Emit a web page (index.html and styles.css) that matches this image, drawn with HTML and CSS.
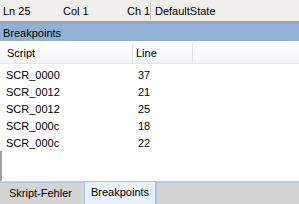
FILE: index.html
```html
<!DOCTYPE html>
<html>
<head>
<meta charset="utf-8">
<link rel="stylesheet" href="styles.css">
</head>
<body>
<div class="app">
  <div class="status">
    <span class="st st-ln">Ln 25</span>
    <span class="st st-col">Col 1</span>
    <span class="st st-ch">Ch 1</span>
    <span class="st st-state">DefaultState</span>
  </div>
  <div class="splitter"></div>
  <div class="title">Breakpoints</div>
  <div class="list">
    <div class="colhead">
      <div class="hcell c-script">Script</div>
      <div class="hcell c-line">Line</div>
      <div class="hcell c-rest"></div>
    </div>
    <div class="rows">
      <div class="row"><span class="c-script">SCR_0000</span><span class="c-line">37</span></div>
      <div class="row"><span class="c-script">SCR_0012</span><span class="c-line">21</span></div>
      <div class="row"><span class="c-script">SCR_0012</span><span class="c-line">25</span></div>
      <div class="row"><span class="c-script">SCR_000c</span><span class="c-line">18</span></div>
      <div class="row"><span class="c-script">SCR_000c</span><span class="c-line">22</span></div>
    </div>
    <div class="filler"></div>
  </div>
  <div class="tabs">
    <div class="tab">Skript-Fehler</div>
    <div class="tab active">Breakpoints</div>
    <div class="tabfill"></div>
  </div>
</div>
</body>
</html>
```
FILE: styles.css
```css
* { box-sizing: border-box; }
html, body { margin: 0; padding: 0; }
body {
  width: 299px;
  height: 204px;
  overflow: hidden;
  font-family: "Liberation Sans", Arial, sans-serif;
  font-size: 11px;
  color: #000;
  background: #fff;
}
.app {
  display: flex;
  flex-direction: column;
  height: 204px;
}
.status {
  height: 21px;
  background: #f0eeeb;
  display: flex;
  align-items: center;
  padding-left: 3px;
  padding-top: 1px;
}
.st { white-space: nowrap; }
.st-ln { width: 60px; }
.st-col { width: 64px; }
.st-ch { width: 23px; }
.st-state {
  border-left: 1px solid #c8c5c0;
  padding-left: 4px;
  height: 17px;
  line-height: 17px;
}
.splitter {
  height: 3px;
  background: #a3a3a3;
}
.title {
  height: 17px;
  line-height: 18px;
  background: #8fb1d8;
  padding-left: 3px;
}
.list {
  flex: 1;
  background: #fff;
  padding-top: 2px;
  display: flex;
  flex-direction: column;
}
.colhead {
  height: 21px;
  display: flex;
  background: linear-gradient(#ffffff, #f3f4f6);
  border-bottom: 1px solid #e5e5e5;
}
.hcell {
  height: 100%;
  line-height: 20px;
  border-right: 1px solid #e3e4e6;
}
.colhead .c-script { width: 133px; padding-left: 7px; }
.colhead .c-line { width: 60px; padding-left: 3px; }
.colhead .c-rest { flex: 1; border-right: none; }
.rows { padding-top: 2px; }
.row {
  height: 17px;
  line-height: 18px;
  display: flex;
}
.row .c-script { width: 132px; padding-left: 6px; }
.row .c-line { padding-left: 6px; }
.filler {
  flex: 1;
  border-left: 2px solid #a0a0a0;
}
.tabs {
  height: 23px;
  background: #d4d4d4;
  display: flex;
  align-items: flex-end;
}
.tab {
  height: 22px;
  line-height: 21px;
  padding: 0 12px 0 9px;
  border-top: 1px solid #a8c2e0;
  white-space: nowrap;
}
.tab.active {
  height: 23px;
  background: #eaf0f8;
  border: 1px solid #a8c2e0;
  border-bottom: none;
  padding: 0 6px 0 6px;
  margin-left: 0;
}
.tabfill {
  flex: 1;
  height: 22px;
  border-top: 1px solid #a8c2e0;
  border-left: 1px solid #a8c2e0;
}
```
